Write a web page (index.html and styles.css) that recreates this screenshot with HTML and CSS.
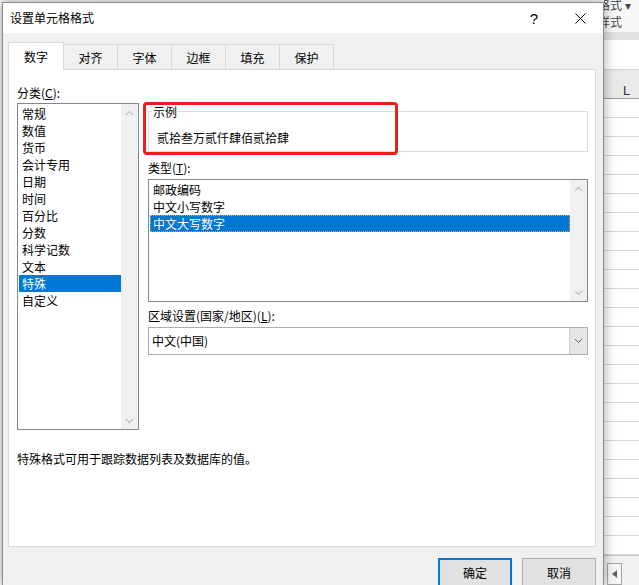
FILE: index.html
```html
<!DOCTYPE html>
<html lang="zh-CN">
<head>
  <meta charset="UTF-8">
  <meta name="viewport" content="width=device-width, initial-scale=1.0">
  <title>设置单元格格式</title>
  <link rel="stylesheet" href="styles.css">
</head>
<body>
  <div class="screen">
    <div class="edge"></div>

    <div class="dialog">
      <div class="titlebar">
        <span class="title">设置单元格格式</span>
        <span class="caption-btn help">?</span>
        <span class="caption-btn">
          <svg width="11" height="11" viewBox="0 0 11 11"><path d="M0.5 0.5L10.5 10.5M10.5 0.5L0.5 10.5" stroke="#000" stroke-width="1" fill="none"/></svg>
        </span>
      </div>

      <div class="dialog-body">
        <div class="tabs">
          <div class="tab active">数字</div>
          <div class="tab">对齐</div>
          <div class="tab">字体</div>
          <div class="tab">边框</div>
          <div class="tab">填充</div>
          <div class="tab">保护</div>
        </div>

        <div class="panel">
          <div class="col-left">
            <div class="label">分类(<u>C</u>):</div>
            <div class="listbox category">
              <ul class="items">
                <li>常规</li>
                <li>数值</li>
                <li>货币</li>
                <li>会计专用</li>
                <li>日期</li>
                <li>时间</li>
                <li>百分比</li>
                <li>分数</li>
                <li>科学记数</li>
                <li>文本</li>
                <li class="selected">特殊</li>
                <li>自定义</li>
              </ul>
              <div class="vscroll">
                <span class="arrow"><svg width="9" height="6" viewBox="0 0 9 6"><polyline points="1,5 4.5,1.5 8,5" stroke="#c4c4c4" stroke-width="1.3" fill="none"/></svg></span>
                <span class="arrow"><svg width="9" height="6" viewBox="0 0 9 6"><polyline points="1,1 4.5,4.5 8,1" stroke="#c4c4c4" stroke-width="1.3" fill="none"/></svg></span>
              </div>
            </div>
          </div>

          <div class="col-right">
            <fieldset class="sample">
              <legend>示例</legend>
              <div class="sample-text">贰拾叁万贰仟肆佰贰拾肆</div>
            </fieldset>
            <div class="mark"></div>

            <div class="label type-label">类型(<u>T</u>):</div>
            <div class="listbox types">
              <ul class="items">
                <li>邮政编码</li>
                <li>中文小写数字</li>
                <li class="selected focused">中文大写数字</li>
              </ul>
              <div class="vscroll">
                <span class="arrow"><svg width="9" height="6" viewBox="0 0 9 6"><polyline points="1,5 4.5,1.5 8,5" stroke="#c4c4c4" stroke-width="1.3" fill="none"/></svg></span>
                <span class="arrow"><svg width="9" height="6" viewBox="0 0 9 6"><polyline points="1,1 4.5,4.5 8,1" stroke="#c4c4c4" stroke-width="1.3" fill="none"/></svg></span>
              </div>
            </div>

            <div class="label locale-label">区域设置(国家/地区)(<u>L</u>):</div>
            <div class="select">
              <span class="select-value">中文(中国)</span>
              <span class="select-btn"><svg width="9" height="6" viewBox="0 0 9 6"><polyline points="1,1 4.5,4.5 8,1" stroke="#606060" stroke-width="1" fill="none"/></svg></span>
            </div>
          </div>

          <p class="desc">特殊格式可用于跟踪数据列表及数据库的值。</p>
        </div>

        <div class="buttons">
          <div class="btn default">确定</div>
          <div class="btn">取消</div>
        </div>
      </div>
    </div>

    <div class="sheet">
      <div class="ribbon">
        <div class="ribbon-line first">格式 ▾</div>
        <div class="ribbon-line">样式</div>
      </div>
      <div class="ribbon-bottom"></div>
      <div class="fx"></div>
      <div class="colhead">L</div>
      <div class="row"></div><div class="row"></div><div class="row"></div><div class="row"></div>
      <div class="row"></div><div class="row"></div><div class="row"></div><div class="row"></div>
      <div class="row"></div><div class="row"></div><div class="row"></div><div class="row"></div>
      <div class="row"></div><div class="row"></div><div class="row"></div><div class="row"></div>
      <div class="row"></div><div class="row"></div><div class="row"></div><div class="row"></div>
      <div class="row"></div><div class="row"></div><div class="row"></div><div class="row"></div>
      <div class="hscroll">
        <div class="hbtn"><svg width="5" height="8" viewBox="0 0 5 8"><polygon points="5,0 5,8 0,4" fill="#606060"/></svg></div>
      </div>
    </div>
  </div>
</body>
</html>
```

FILE: styles.css
```css
html, body {
  margin: 0;
}
body {
  font: 12px/17px "Noto Sans CJK SC", "Noto Sans", sans-serif;
  color: #000;
  background: #fff;
}
.screen {
  display: flex;
  height: 585px;
  overflow: hidden;
  background: #f7f7f7;
}
.edge {
  flex: none;
  width: 2px;
}

/* dialog window */
.dialog {
  flex: none;
  width: 602px;
  box-sizing: border-box;
  margin-top: 2px;
  border: 1px solid #8a8a8a;
  border-bottom: 0;
  background: #f0f0f0;
  position: relative;
  z-index: 1;
  box-shadow: 0 0 12px rgba(0, 0, 0, 0.35);
}
.titlebar {
  height: 30px;
  background: #fff;
  display: flex;
  align-items: center;
}
.title {
  flex: 1;
  padding: 0 0 1px 7px;
}
.caption-btn {
  width: 46px;
  height: 30px;
  display: flex;
  align-items: center;
  justify-content: center;
}
.help {
  font: 15px "Liberation Sans", sans-serif;
}
.dialog-body {
  padding: 0 7px 0 5px;
}

/* tabs */
.tabs {
  display: flex;
  align-items: flex-end;
  height: 27px;
  margin-top: 9px;
}
.tab {
  box-sizing: border-box;
  width: 55px;
  height: 25px;
  margin-left: -1px;
  padding-top: 1px;
  border: 1px solid #d9d9d9;
  border-bottom: 0;
  text-align: center;
  line-height: 23px;
  background: #f0f0f0;
}
.tab.active {
  width: 56px;
  height: 28px;
  margin-left: 0;
  margin-bottom: -1px;
  padding-top: 2px;
  line-height: 24px;
  background: #fff;
  position: relative;
  z-index: 1;
}

/* panel */
.panel {
  box-sizing: border-box;
  height: 478px;
  background: #fff;
  border: 1px solid #d9d9d9;
  padding: 14px 0 0 8px;
  display: grid;
  grid-template-columns: 122px 440px;
  column-gap: 9px;
  align-content: start;
}
.label {
  line-height: 17px;
  margin-bottom: 2px;
}
.type-label {
  margin: 7px 0 3px;
}
.locale-label {
  margin: 5px 0 3px;
}
.listbox {
  box-sizing: border-box;
  border: 1px solid #828790;
  background: #fff;
  display: flex;
}
.category {
  height: 327px;
}
.types {
  height: 123px;
}
.items {
  flex: 1;
  list-style: none;
  margin: 0;
  padding: 1px 0 0 1px;
}
.items li {
  height: 17px;
  padding-left: 3px;
  white-space: nowrap;
}
.items li.selected {
  background: #0078d7;
  color: #fff;
}
.items li.focused {
  box-sizing: border-box;
  padding-left: 2px;
  line-height: 15px;
  border: 1px dotted #e9a04c;
}
.vscroll {
  flex: none;
  width: 17px;
  background: #f0f0f0;
  display: flex;
  flex-direction: column;
  justify-content: space-between;
}
.arrow {
  height: 17px;
  display: flex;
  align-items: center;
  justify-content: center;
}

/* sample group */
.col-right {
  position: relative;
}
.sample {
  margin: 19px 0 0;
  padding: 0 0 5px 3px;
  border: 1px solid #dcdcdc;
  min-width: 0;
}
.sample legend {
  padding: 0 1px;
  line-height: 17px;
}
.sample-text {
  margin: 9px 0 0 5px;
}
.mark {
  position: absolute;
  left: -5px;
  top: 18px;
  width: 255px;
  height: 53px;
  box-sizing: border-box;
  border: 3px solid #ee1d1d;
  border-radius: 4px;
}

/* dropdown */
.select {
  box-sizing: border-box;
  height: 28px;
  border: 1px solid #adadad;
  display: flex;
  line-height: 26px;
}
.select-value {
  flex: 1;
  padding-left: 3px;
}
.select-btn {
  width: 17px;
  background: #e5e5e5;
  border-left: 1px solid #cfcfcf;
  display: flex;
  align-items: center;
  justify-content: center;
}
.desc {
  grid-column: 1 / -1;
  margin: 20px 0 0;
}

/* buttons */
.buttons {
  display: flex;
  justify-content: flex-end;
  gap: 10px;
  margin-top: 11px;
}
.btn {
  box-sizing: border-box;
  width: 74px;
  height: 30px;
  border: 1px solid #adadad;
  background: #e1e1e1;
  text-align: center;
  line-height: 28px;
}
.btn.default {
  border: 2px solid #0078d7;
  line-height: 26px;
}

/* worksheet behind the dialog */
.sheet {
  flex: 1;
  overflow: hidden;
  display: flex;
  flex-direction: column;
  background: #fff;
}
.ribbon {
  flex: none;
  height: 32px;
  background: #f8f8f8;
  color: #444;
}
.ribbon-line {
  white-space: nowrap;
  text-indent: -6px;
}
.ribbon-line.first {
  margin-top: -4px;
}
.ribbon-bottom {
  flex: none;
  height: 8px;
  background: #e1e1e1;
}
.fx {
  flex: none;
  height: 29px;
}
.colhead {
  flex: none;
  box-sizing: border-box;
  height: 30px;
  padding: 12px 0 0 19px;
  border-top: 1px solid #d4d4d4;
  border-bottom: 1px solid #9b9b9b;
  background: #e9e9e9;
  color: #333;
  font-family: "Liberation Sans", sans-serif;
  font-size: 13px;
}
.row {
  flex: none;
  box-sizing: border-box;
  height: 19px;
  border-bottom: 1px solid #d6d6d6;
}
.hscroll {
  flex: 1;
  background: #f0f0f0;
  border-top: 1px solid #c6c6c6;
  padding: 7px 0 0 3px;
}
.hbtn {
  box-sizing: border-box;
  width: 15px;
  height: 22px;
  border: 1px solid #a6a6a6;
  background: #f6f6f6;
  display: flex;
  align-items: center;
  justify-content: center;
}
```
